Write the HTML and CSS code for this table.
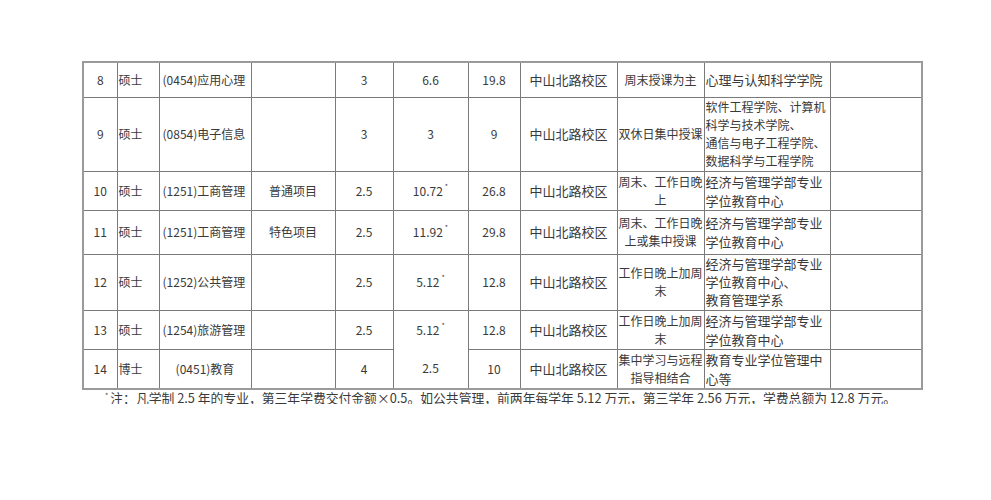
FILE: index.html
```html
<!DOCTYPE html>
<html lang="zh-CN">
<head>
<meta charset="utf-8">
<title>学费表</title>
<link rel="stylesheet" href="styles.css">
</head>
<body>
<div class="page">
  <table class="fees">
    <colgroup>
      <col class="c1"><col class="c2"><col class="c3"><col class="c4"><col class="c5"><col class="c6"><col class="c7"><col class="c8"><col class="c9"><col class="c10"><col class="c11">
    </colgroup>
    <tbody>
      <tr class="r8">
        <td class="num">8</td><td class="deg">硕士</td><td class="major">(0454)应用心理</td><td class="proj"></td>
        <td class="num">3</td><td class="num">6.6</td><td class="num">19.8</td><td class="campus">中山北路校区</td>
        <td class="mode">周末授课为主</td><td class="dept">心理与认知科学学院</td><td></td>
      </tr>
      <tr class="r9">
        <td class="num">9</td><td class="deg">硕士</td><td class="major">(0854)电子信息</td><td class="proj"></td>
        <td class="num">3</td><td class="num">3</td><td class="num">9</td><td class="campus">中山北路校区</td>
        <td class="mode">双休日集中授课</td><td class="dept small">软件工程学院、计算机<br>科学与技术学院、<br>通信与电子工程学院、<br>数据科学与工程学院</td><td></td>
      </tr>
      <tr class="r10">
        <td class="num">10</td><td class="deg">硕士</td><td class="major">(1251)工商管理</td><td class="proj">普通项目</td>
        <td class="num">2.5</td><td class="num">10.72<sup class="star">*</sup></td><td class="num">26.8</td><td class="campus">中山北路校区</td>
        <td class="mode">周末、工作日晚<br>上</td><td class="dept">经济与管理学部专业<br>学位教育中心</td><td></td>
      </tr>
      <tr class="r11">
        <td class="num">11</td><td class="deg">硕士</td><td class="major">(1251)工商管理</td><td class="proj">特色项目</td>
        <td class="num">2.5</td><td class="num">11.92<sup class="star">*</sup></td><td class="num">29.8</td><td class="campus">中山北路校区</td>
        <td class="mode">周末、工作日晚<br>上或集中授课</td><td class="dept">经济与管理学部专业<br>学位教育中心</td><td></td>
      </tr>
      <tr class="r12">
        <td class="num">12</td><td class="deg">硕士</td><td class="major">(1252)公共管理</td><td class="proj"></td>
        <td class="num">2.5</td><td class="num">5.12<sup class="star">*</sup></td><td class="num">12.8</td><td class="campus">中山北路校区</td>
        <td class="mode">工作日晚上加周<br>末</td><td class="dept tight">经济与管理学部专业<br>学位教育中心、<br>教育管理学系</td><td></td>
      </tr>
      <tr class="r13">
        <td class="num">13</td><td class="deg">硕士</td><td class="major">(1254)旅游管理</td><td class="proj"></td>
        <td class="num">2.5</td><td class="num open-bottom">5.12<sup class="star">*</sup></td><td class="num">12.8</td><td class="campus">中山北路校区</td>
        <td class="mode">工作日晚上加周<br>末</td><td class="dept">经济与管理学部专业<br>学位教育中心</td><td></td>
      </tr>
      <tr class="r14">
        <td class="num">14</td><td class="deg">博士</td><td class="major center">(0451)教育</td><td class="proj"></td>
        <td class="num">4</td><td class="num">2.5</td><td class="num">10</td><td class="campus">中山北路校区</td>
        <td class="mode">集中学习与远程<br>指导相结合</td><td class="dept">教育专业学位管理中<br>心等</td><td></td>
      </tr>
    </tbody>
  </table>
  <p class="note"><sup class="star">*</sup>注：凡学制 2.5 年的专业，第三年学费交付金额×0.5。如公共管理，前两年每学年 5.12 万元，第三学年 2.56 万元，学费总额为 12.8 万元。</p>
</div>
</body>
</html>
```

FILE: styles.css
```css
html, body {
  margin: 0;
  padding: 0;
  background: #ffffff;
}

body {
  font-family: "Noto Sans CJK SC", "Noto Sans", sans-serif;
  color: #3a3a3a;
}

.page {
  padding: 61px 0 0 82px;
}

.fees {
  border-collapse: collapse;
  table-layout: fixed;
  width: 839px;
  border: 2px solid #9a9a9a;
}

.c1 { width: 34px; }
.c2 { width: 42px; }
.c3 { width: 92px; }
.c4 { width: 84px; }
.c5 { width: 58px; }
.c6 { width: 75px; }
.c7 { width: 52px; }
.c8 { width: 97px; }
.c9 { width: 87px; }
.c10 { width: 126px; }
.c11 { width: 92px; }

.fees td {
  border: 1px solid #7a7a7a;
  padding: 0;
  font-size: 12px;
  line-height: 18px;
  vertical-align: middle;
  white-space: nowrap;
  overflow: hidden;
}

.r8 { height: 35px; }
.r9 { height: 74px; }
.r10 { height: 38px; }
.r11 { height: 44px; }
.r12 { height: 56px; }
.r13 { height: 39px; }
.r14 { height: 35px; }

.fees td.num,
.fees td.proj,
.fees td.campus,
.fees td.mode,
.fees td.center {
  text-align: center;
}

.fees td.deg {
  padding-left: 1px;
}

.fees td.major {
  padding-left: 3px;
}

.fees td.major.center {
  padding-left: 0;
}

.fees td.campus {
  font-size: 13px;
}

.fees td.mode {
  font-size: 12px;
}

.fees td.dept {
  font-size: 13px;
  line-height: 19px;
  text-align: left;
  padding-left: 1px;
}

.fees td.dept.tight {
  line-height: 18px;
}

.fees td.dept.small {
  font-size: 12px;
  line-height: 18px;
}

.fees td.open-bottom {
  border-bottom-style: hidden;
}

.star {
  font-size: 7px;
  vertical-align: top;
  line-height: 1;
  margin-left: 2px;
  position: relative;
  top: 1px;
}

.note {
  margin: 1px 0 0 23px;
  font-size: 12.8px;
  line-height: 13px;
  white-space: nowrap;
}

.note .star {
  margin-left: 0;
  margin-right: 2px;
}
```
